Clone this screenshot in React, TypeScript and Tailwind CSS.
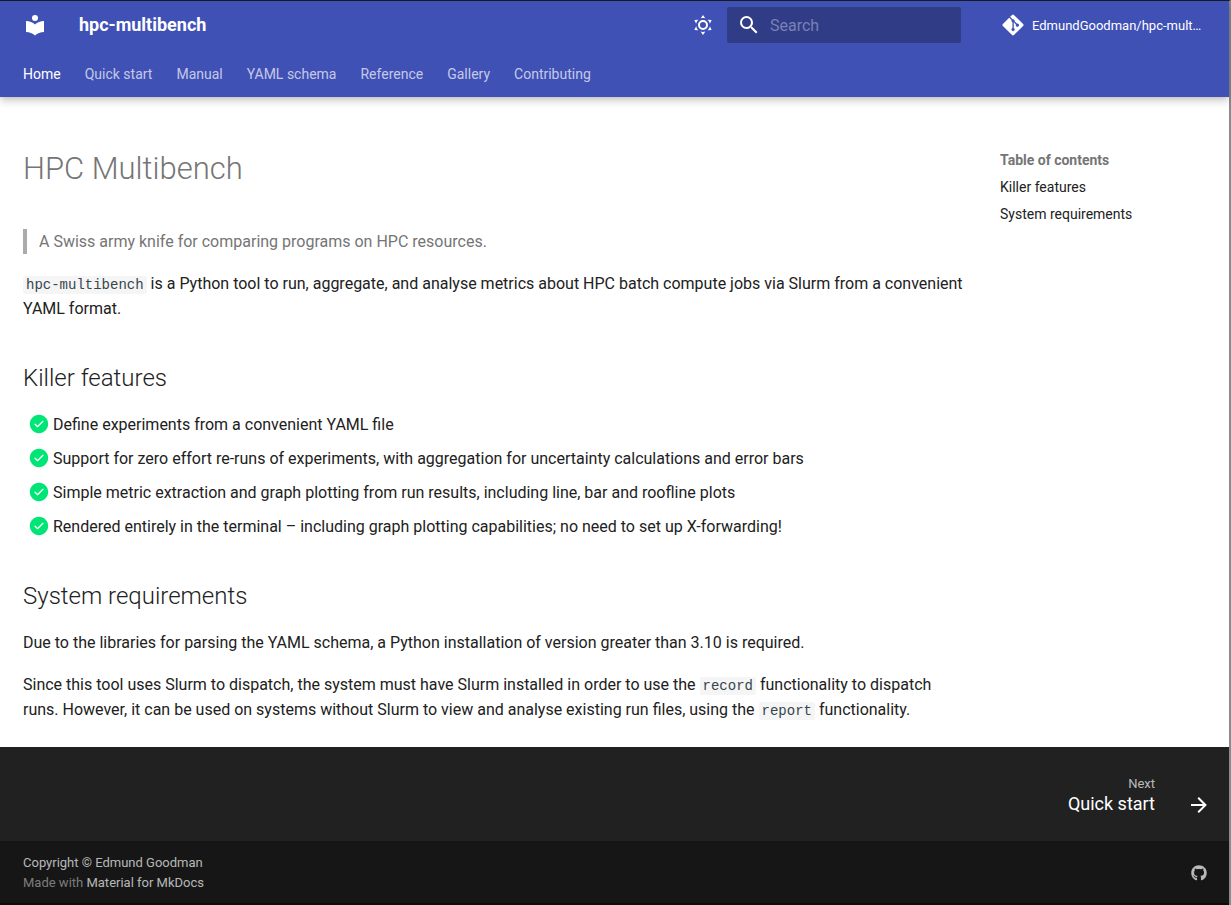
import { FaGitAlt, FaGithub } from "react-icons/fa";
import type { ReactNode } from "react";

const tabs = ["Home", "Quick start", "Manual", "YAML schema", "Reference", "Gallery", "Contributing"];

const features = [
  "Define experiments from a convenient YAML file",
  "Support for zero effort re-runs of experiments, with aggregation for uncertainty calculations and error bars",
  "Simple metric extraction and graph plotting from run results, including line, bar and roofline plots",
  "Rendered entirely in the terminal – including graph plotting capabilities; no need to set up X-forwarding!",
];

const paths = {
  logo: "M12 8a3 3 0 0 0 3-3 3 3 0 0 0-3-3 3 3 0 0 0-3 3 3 3 0 0 0 3 3m0 3.54C9.64 9.35 6.5 8 3 8v11c3.5 0 6.64 1.35 9 3.54 2.36-2.19 5.5-3.54 9-3.54V8c-3.5 0-6.64 1.35-9 3.54Z",
  sun: "M12 7a5 5 0 0 1 5 5 5 5 0 0 1-5 5 5 5 0 0 1-5-5 5 5 0 0 1 5-5m0 2a3 3 0 0 0-3 3 3 3 0 0 0 3 3 3 3 0 0 0 3-3 3 3 0 0 0-3-3m0-7 2.39 3.42C13.65 5.15 12.84 5 12 5c-.84 0-1.65.15-2.39.42L12 2M3.34 7l4.16-.35A7.2 7.2 0 0 0 5.94 8.5c-.44.74-.69 1.5-.83 2.29L3.34 7m.02 10 1.76-3.77a7.131 7.131 0 0 0 2.38 4.14L3.36 17M20.65 7l-1.77 3.79a7.023 7.023 0 0 0-2.38-4.15l4.15.36m-.01 10-4.14.36c.59-.51 1.12-1.14 1.54-1.86.42-.73.69-1.5.83-2.29L20.64 17M12 22l-2.41-3.44c.74.27 1.55.44 2.41.44.82 0 1.63-.17 2.37-.44L12 22Z",
  search: "M9.5 3A6.5 6.5 0 0 1 16 9.5c0 1.61-.59 3.09-1.56 4.23l.27.27h.79l5 5-1.5 1.5-5-5v-.79l-.27-.27A6.516 6.516 0 0 1 9.5 16 6.5 6.5 0 0 1 3 9.5 6.5 6.5 0 0 1 9.5 3m0 2C7 5 5 7 5 9.5S7 14 9.5 14 14 12 14 9.5 12 5 9.5 5Z",
  arrow: "M4 11v2h12l-5.5 5.5 1.42 1.42L19.84 12l-7.92-7.92L10.5 5.5 16 11H4Z",
  check: "M1 12C1 5.925 5.925 1 12 1s11 4.925 11 11-4.925 11-11 11S1 18.075 1 12Zm16.28-2.72a.751.751 0 0 0-.018-1.042.751.751 0 0 0-1.042-.018l-5.97 5.97-2.47-2.47a.751.751 0 0 0-1.042.018.751.751 0 0 0-.018 1.042l3 3a.75.75 0 0 0 1.06 0Z",
};

function Icon({ name, className }: { name: keyof typeof paths; className: string }) {
  return (
    <svg viewBox="0 0 24 24" fill="currentColor" className={className} aria-hidden="true">
      <path d={paths[name]} />
    </svg>
  );
}

function Code({ children }: { children: ReactNode }) {
  return (
    <code className="rounded-[2px] bg-[#f5f5f5] px-[3px] py-px font-['Liberation_Mono',monospace] text-[14px] leading-none text-[#36464e]">
      {children}
    </code>
  );
}

function Header() {
  return (
    <header className="relative bg-[#4051b5] text-white shadow-[0_0_4px_rgba(0,0,0,0.1),0_4px_8px_rgba(0,0,0,0.2)]">
      <div className="flex h-12 items-center pr-6 pl-[23px]">
        <a href="#" aria-label="hpc-multibench home">
          <Icon name="logo" className="size-6" />
        </a>
        <a href="#" className="ml-8 text-[18px] leading-6 font-bold">hpc-multibench</a>
        <button type="button" aria-label="Switch to dark mode" className="mr-3 ml-auto">
          <Icon name="sun" className="size-6" />
        </button>
        <label className="flex h-9 w-[234px] items-center gap-[9px] rounded-[2px] bg-[#303d86] px-[10px]">
          <Icon name="search" className="size-6 shrink-0" />
          <input
            type="search"
            aria-label="Search"
            placeholder="Search"
            className="min-w-0 flex-1 bg-transparent text-[16px] outline-none placeholder:text-[#7881b5]"
          />
        </label>
        <a href="#" className="ml-10 flex w-[204px] items-center gap-[7px] text-[13px] whitespace-nowrap">
          <FaGitAlt className="size-6 shrink-0" />
          <span>EdmundGoodman/hpc-mult…</span>
        </a>
      </div>
      <nav className="flex h-12 items-center gap-6 px-[23px] pt-0.5 text-[14px]" aria-label="Tabs">
        {tabs.map((tab, i) => (
          <a key={tab} href="#" className={i === 0 ? "text-white" : "text-white/70"}>
            {tab}
          </a>
        ))}
      </nav>
    </header>
  );
}

function Footer() {
  return (
    <footer className="text-white">
      <nav className="flex h-[94px] justify-end bg-[#212121] pt-[26px] pr-[18px]" aria-label="Footer">
        <a href="#" className="flex items-start gap-8">
          <span className="flex flex-col text-right">
            <span className="text-[13px] leading-[21px] text-white/70">Next</span>
            <span className="text-[18px] leading-5">Quick start</span>
          </span>
          <Icon name="arrow" className="mt-5 size-6" />
        </a>
      </nav>
      <div className="flex items-center justify-between bg-[#161616] pt-3 pr-[22px] pb-[10px] pl-[23px] text-[13px] leading-5">
        <div>
          <p className="text-white/70">Copyright © Edmund Goodman</p>
          <p className="text-white/45">
            Made with <a href="#" className="text-white/70">Material for MkDocs</a>
          </p>
        </div>
        <a href="#" aria-label="GitHub" className="text-white/70">
          <FaGithub className="size-4" />
        </a>
      </div>
      <div className="h-0.5 bg-[#0c0c0c]" />
    </footer>
  );
}

export default function App() {
  return (
    <div className="flex min-h-screen flex-col border-t border-r-2 border-t-[#1b1e28] border-r-[#868d8a] bg-white font-[Roboto,sans-serif] text-[16px] leading-[25px] text-[#212121]">
      <Header />
      <div className="flex flex-1 gap-[35px] px-[23px] pt-[50px] pb-[25px]">
        <main className="min-w-0 flex-1">
          <h1 className="mb-[38px] text-[31px] leading-[44px] font-light text-[#757575]">HPC Multibench</h1>
          <blockquote className="border-l-4 border-[#ababab] pl-3 text-[#757575]">
            A Swiss army knife for comparing programs on HPC resources.
          </blockquote>
          <p className="mt-[17px]">
            <Code>hpc-multibench</Code> is a Python tool to run, aggregate, and analyse metrics about HPC batch compute
            jobs via Slurm from a convenient YAML format.
          </p>
          <h2 id="killer-features" className="mt-10 mb-4 text-[24px] leading-[35px] font-light">Killer features</h2>
          <ul className="flex flex-col gap-[9px] pl-1.5">
            {features.map((feature) => (
              <li key={feature} className="flex items-start gap-1">
                <Icon name="check" className="mt-0.5 size-5 shrink-0 text-[#00e676]" />
                {feature}
              </li>
            ))}
          </ul>
          <h2 id="system-requirements" className="mt-10 mb-4 text-[24px] leading-[35px] font-light">System requirements</h2>
          <p>
            Due to the libraries for parsing the YAML schema, a Python installation of version greater than 3.10 is
            required.
          </p>
          <p className="mt-[17px]">
            Since this tool uses Slurm to dispatch, the system must have Slurm installed in order to use the{" "}
            <Code>record</Code> functionality to dispatch runs. However, it can be used on systems without Slurm to
            view and analyse existing run files, using the <Code>report</Code> functionality.
          </p>
        </main>
        <nav className="flex w-[206px] shrink-0 flex-col gap-[9px] pt-1 text-[14px] leading-[18px]" aria-label="Table of contents">
          <p className="font-bold text-[#757575]">Table of contents</p>
          <a href="#killer-features">Killer features</a>
          <a href="#system-requirements">System requirements</a>
        </nav>
      </div>
      <Footer />
    </div>
  );
}
